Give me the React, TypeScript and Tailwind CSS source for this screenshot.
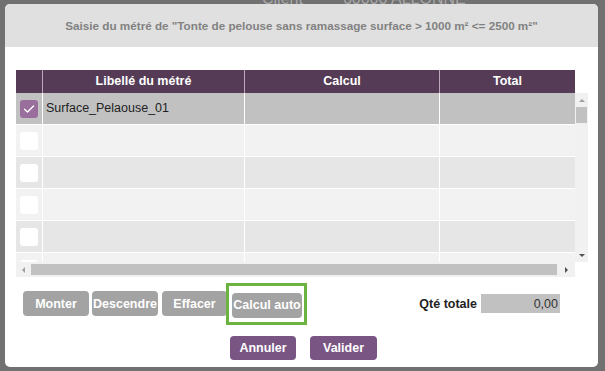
import React from "react";

const rows = [
  { label: "Surface_Pelaouse_01", checked: true },
  { label: "", checked: false },
  { label: "", checked: false },
  { label: "", checked: false },
  { label: "", checked: false },
  { label: "", checked: false },
];

function Checkbox({ checked }: { checked: boolean }) {
  if (checked) {
    return (
      <div className="w-[18px] h-[18px] rounded-[3px] bg-[#9a6e9c] flex items-center justify-center">
        <svg width="12" height="10" viewBox="0 0 12 10" fill="none">
          <path d="M1.5 5.2 4.5 8 10.5 2" stroke="#ffffff" strokeWidth="1.4" strokeLinecap="round" strokeLinejoin="round" />
        </svg>
      </div>
    );
  }
  return <div className="w-[18px] h-[18px] rounded-[3px] bg-white" />;
}

export default function App() {
  return (
    <div
      className="relative w-[605px] h-[371px] overflow-hidden bg-[#717171]"
      style={{ fontFamily: "'Liberation Sans', Arial, sans-serif" }}
    >
      {/* page behind the dialog */}
      <div className="flex gap-[40px] pl-[262px] text-[16px] text-[#a8a8a8] -mt-[11px] leading-[20px]">
        <span>Client</span>
        <span>60000 ALLONNE</span>
      </div>

      {/* dialog */}
      <div className="absolute left-[5px] top-[4px] w-[593px] h-[363px] bg-white rounded-[5px] overflow-hidden flex flex-col">
        <div className="h-[43px] bg-[#e0e0e0] flex items-center justify-center text-[11.7px] font-bold text-[#828282] pt-[1px]">
          Saisie du métré de "Tonte de pelouse sans ramassage surface &gt; 1000 m² &lt;= 2500 m²"
        </div>

        <div className="pl-[11px] pt-[23px]">
          {/* header */}
          <div className="flex w-[559px] h-[23px] bg-[#563b56] text-white text-[12.5px] font-bold">
            <div className="w-[27px] border-r border-[#b9a9b9]" />
            <div className="w-[202px] border-r border-[#b9a9b9] flex items-center justify-center">Libellé du métré</div>
            <div className="w-[195px] border-r border-[#b9a9b9] flex items-center justify-center">Calcul</div>
            <div className="flex-1 flex items-center justify-center">Total</div>
          </div>

          <div className="flex">
            {/* rows viewport */}
            <div className="w-[559px] h-[169px] overflow-hidden">
              {rows.map((r, i) => (
                <div
                  key={i}
                  className={
                    "flex h-[32px] border-b border-white " +
                    (i === 0 ? "bg-[#c1c1c1]" : i % 2 === 1 ? "bg-[#f2f2f2]" : "bg-[#e6e6e6]")
                  }
                >
                  <div className="w-[27px] border-r border-white flex items-center justify-center">
                    <Checkbox checked={r.checked} />
                  </div>
                  <div className="w-[202px] border-r border-white flex items-center pl-[3px] text-[12.5px] text-[#222222]">
                    {r.label}
                  </div>
                  <div className="w-[195px] border-r border-white" />
                  <div className="flex-1" />
                </div>
              ))}
            </div>
            {/* vertical scrollbar */}
            <div className="w-[13px] h-[169px] bg-[#f1f1f1] flex flex-col items-center">
              <div className="h-[14px] flex items-center justify-center">
                <div className="w-0 h-0 border-l-[3px] border-r-[3px] border-b-[3px] border-l-transparent border-r-transparent border-b-[#a0a0a0]" />
              </div>
              <div className="w-[11px] h-[16px] bg-[#c1c1c1]" />
              <div className="flex-1" />
              <div className="h-[14px] flex items-center justify-center">
                <div className="w-0 h-0 border-l-[3px] border-r-[3px] border-t-[3px] border-l-transparent border-r-transparent border-t-[#505050]" />
              </div>
            </div>
          </div>

          {/* horizontal scrollbar */}
          <div className="w-[559px] h-[15px] bg-[#f1f1f1] flex items-center">
            <div className="w-[15px] flex items-center justify-center">
              <div className="w-0 h-0 border-t-[3px] border-b-[3px] border-r-[3px] border-t-transparent border-b-transparent border-r-[#a0a0a0]" />
            </div>
            <div className="w-[526px] h-[11px] bg-[#c1c1c1]" />
            <div className="flex-1 flex items-center justify-center">
              <div className="w-0 h-0 border-t-[3px] border-b-[3px] border-l-[3px] border-t-transparent border-b-transparent border-l-[#505050]" />
            </div>
          </div>
        </div>

        {/* action buttons */}
        <div className="flex items-center pl-[18px] pr-[38px] mt-[6px]">
          <div className="flex items-center">
            <button className="w-[66px] h-[25px] rounded-[4px] bg-[#a3a3a3] text-white text-[12.5px] font-bold">Monter</button>
            <button className="w-[66px] h-[25px] rounded-[4px] bg-[#a3a3a3] text-white text-[12.5px] font-bold ml-[3px]">Descendre</button>
            <button className="w-[65px] h-[25px] rounded-[4px] bg-[#a3a3a3] text-white text-[12.5px] font-bold ml-[4px]">Effacer</button>
            <div className="ml-[-1px] border-[3px] border-[#6db33f] pl-[3px] pr-[2px] pt-[6px] pb-[4px]">
              <button className="w-[70px] h-[25px] rounded-[4px] bg-[#a3a3a3] text-white text-[12.5px] font-bold">Calcul auto</button>
            </div>
          </div>
          <div className="flex-1" />
          <span className="text-[12.5px] font-bold text-[#222222] mr-[4px]">Qté totale</span>
          <div className="w-[79px] h-[19px] bg-[#c1c1c1] text-[12.5px] text-[#333333] flex items-center justify-end pr-[2px]">0,00</div>
        </div>

        <div className="flex justify-center gap-[14px] mt-[11px] pl-[4px]">
          <button className="w-[66px] h-[24px] rounded-[4px] bg-[#795583] text-white text-[12.5px] font-bold">Annuler</button>
          <button className="w-[67px] h-[24px] rounded-[4px] bg-[#795583] text-white text-[12.5px] font-bold">Valider</button>
        </div>
      </div>
    </div>
  );
}
